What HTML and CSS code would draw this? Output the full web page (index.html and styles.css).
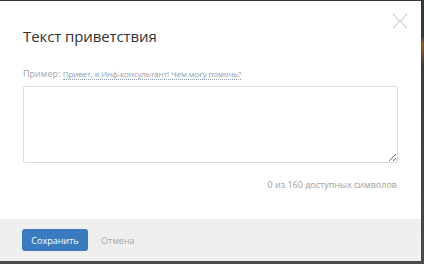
FILE: index.html
```html
<!DOCTYPE html>
<html lang="ru">
<head>
<meta charset="utf-8">
<link rel="stylesheet" href="styles.css">
</head>
<body>
<div class="modal">
  <div class="modal-body">
    <button class="close" aria-label="Закрыть">
      <svg width="16" height="16" viewBox="0 0 16 16"><path d="M1 1L15 15M15 1L1 15" stroke="#d4d4d4" stroke-width="1.2" fill="none"/></svg>
    </button>
    <h1 class="title">Текст приветствия</h1>
    <p class="example">Пример: <span class="sample">Привет, я Инф-консультант! Чем могу помочь?</span></p>
    <textarea class="field"></textarea>
    <p class="counter">0 из 160 доступных символов</p>
  </div>
  <div class="modal-footer">
    <button class="btn-save">Сохранить</button>
    <button class="btn-cancel">Отмена</button>
  </div>
</div>
</body>
</html>
```
FILE: styles.css
```css
html, body { margin: 0; padding: 0; }
body {
  width: 424px;
  height: 264px;
  background: linear-gradient(to bottom, #2f3a38 0, #2f3a38 36px, #8a5a2a 44px, #6a4a30 56px, #3a3c3c 64px, #4a4a4a 100%);
  font-family: "Open Sans", "Noto Sans", sans-serif;
  overflow: hidden;
}
.modal {
  position: relative;
  width: 421px;
  height: 260px;
  margin-top: 1px;
  background: #fff;
  display: flex;
  flex-direction: column;
}
.modal-body {
  flex: 1;
  padding: 0 24px 0 23px;
  display: flex;
  flex-direction: column;
}
.close {
  position: absolute;
  top: 12px;
  right: 13px;
  border: 0;
  background: none;
  padding: 0;
  width: 16px;
  height: 16px;
}
.close svg { display: block; }
.title {
  margin: 24px 0 0;
  font-size: 15px;
  line-height: 22px;
  font-weight: 400;
  color: #333;
  letter-spacing: -0.1px;
}
.example {
  margin: 21px 0 0;
  font-size: 9px;
  line-height: 12px;
  color: #a6a6a6;
}
.sample {
  font-size: 8px;
  letter-spacing: -0.1px;
  color: #8c9db3;
  border-bottom: 1px dotted #8c9db3;
}
.field {
  margin-top: 6px;
  width: 375px;
  height: 77px;
  box-sizing: border-box;
  border: 1px solid #dcdcdc;
  border-radius: 2px;
  resize: vertical;
  font-family: inherit;
  padding: 4px 6px;
}
.counter {
  margin: 16px 0 0;
  text-align: right;
  font-size: 9px;
  line-height: 12px;
  color: #a0a0a0;
}
.modal-footer {
  height: 42px;
  background: #efefef;
  display: flex;
  align-items: center;
  padding: 0 22px;
  gap: 13px;
}
.btn-save {
  height: 22px;
  width: 66px;
  border: 0;
  border-radius: 3px;
  background: #3a7bbf;
  color: #fff;
  font-family: inherit;
  font-size: 9px;
  padding: 0;
}
.btn-cancel {
  border: 0;
  background: none;
  color: #a8a8a8;
  font-family: inherit;
  font-size: 9px;
  padding: 0;
}
```
